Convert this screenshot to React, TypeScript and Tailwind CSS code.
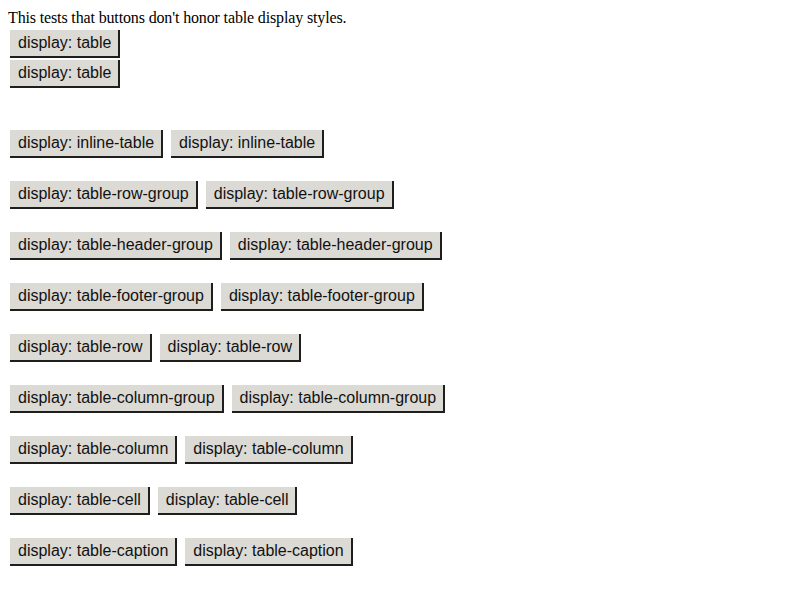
const rows = [
  "inline-table",
  "table-row-group",
  "table-header-group",
  "table-footer-group",
  "table-row",
  "table-column-group",
  "table-column",
  "table-cell",
  "table-caption",
];

// white top/left edge of the old outset border is invisible on white, so just margin it
function Btn({ label }: { label: string }) {
  return (
    <button
      type="button"
      className="box-border h-[28px] whitespace-nowrap border-r-2 border-b-2 border-[#1e1e1e] bg-[#dcdad5] pt-[4px] pb-[4px] pl-[8px] pr-[7px] text-left text-[16px] leading-[18px] text-[#111] font-['Liberation_Sans',Arial,sans-serif]"
    >
      display: {label}
    </button>
  );
}

export default function App() {
  return (
    <div className="bg-white px-[8px] pt-[8px] text-black">
      <p className="font-['Liberation_Serif','Times_New_Roman',serif] text-[16px] leading-[19px] tracking-[-0.14px]">
        This tests that buttons don't honor table display styles.
      </p>

      <div className="mt-[3px] ml-[2px] flex flex-col items-start gap-[2px]">
        <Btn label="table" />
        <Btn label="table" />
      </div>

      <div className="mt-[42px] ml-[2px] flex flex-col gap-[23px]">
        {rows.map((r) => (
          <div key={r} className="flex gap-[8px]">
            <Btn label={r} />
            <Btn label={r} />
          </div>
        ))}
      </div>
    </div>
  );
}
